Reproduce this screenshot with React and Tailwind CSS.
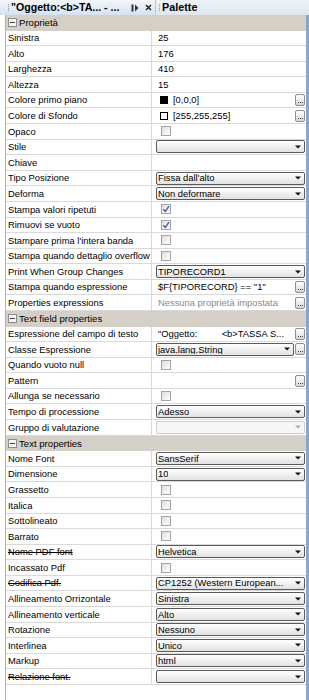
import React from "react";

const FONT = "font-['Liberation_Sans',Arial,sans-serif]";

function Btn() {
  return (
    <div className="ml-auto mr-[1px] flex h-[12px] w-[10px] shrink-0 items-end justify-center gap-[1px] rounded-[2px] border border-[#8e8f8f] bg-linear-to-b from-white to-[#d8d8d8] pb-[2px]">
      <div className="h-[1px] w-[1px] bg-[#444]" />
      <div className="h-[1px] w-[1px] bg-[#444]" />
      <div className="h-[1px] w-[1px] bg-[#444]" />
    </div>
  );
}

function Arrow({ gray }) {
  return (
    <svg width="6" height="4" viewBox="0 0 6 4" className="ml-auto mr-[3px] shrink-0">
      <polygon points="0,0.5 6,0.5 3,3.5" fill={gray ? "#b0b0b0" : "#111"} />
    </svg>
  );
}

function Combo({ text, disabled, withBtn }) {
  return (
    <div className="ml-[4px] flex h-full flex-1 items-center">
      <div
        className={
          "flex h-[13px] flex-1 items-center rounded-[2px] border pl-[1px] " +
          (disabled
            ? "border-[#cdcdcd] bg-[#f6f6f6]"
            : "border-[#5a5a5a] bg-linear-to-b from-white to-[#e2e2e2]")
        }
      >
        <span className="truncate text-[9.4px] leading-none text-black">{text}</span>
        <Arrow gray={disabled} />
      </div>
      {withBtn ? (
        <div className="ml-[1px] flex items-center">
          <Btn />
        </div>
      ) : (
        <div className="w-[1px]" />
      )}
    </div>
  );
}

function Check({ checked }) {
  return (
    <div className="ml-[9px] flex h-[10px] w-[10px] items-center justify-center border border-[#a4a4a4] bg-linear-to-br from-[#dedede] to-white">
      {checked && (
        <svg width="8" height="8" viewBox="0 0 8 8">
          <path d="M1.3 4.2 L3.3 6.4 L7 1.2" fill="none" stroke="#3b5fae" strokeWidth="1.4" />
        </svg>
      )}
    </div>
  );
}

function Value({ v }) {
  if (!v) return null;
  switch (v.t) {
    case "text":
      return (
        <>
          <span className={"pl-[6px] text-[9.4px] leading-none " + (v.gray ? "text-[#8a8a8a]" : "text-black")}>
            {v.s}
          </span>
          {v.btn && <Btn />}
        </>
      );
    case "expr":
      return (
        <>
          <div className="flex w-[132px] justify-between pl-[6px] text-[9.4px] leading-none text-black">
            <span>"Oggetto:</span>
            <span>&lt;b&gt;TASSA S...</span>
          </div>
          <Btn />
        </>
      );
    case "color":
      return (
        <>
          <div className={"ml-[8px] h-[8px] w-[8px] border border-black " + (v.fill ? "bg-black" : "bg-white")} />
          <span className="pl-[5px] text-[9.4px] leading-none text-black">{v.s}</span>
          <Btn />
        </>
      );
    case "check":
      return <Check checked={v.c} />;
    case "combo":
      return <Combo text={v.s} disabled={v.dis} withBtn={v.btn} />;
    case "btn":
      return <Btn />;
    default:
      return null;
  }
}

const T = (s, extra = {}) => ({ t: "text", s, ...extra });
const C = (c) => ({ t: "check", c });
const CB = (s, extra = {}) => ({ t: "combo", s, ...extra });

const rows = [
  { h: "Proprietà" },
  { l: "Sinistra", v: T("25") },
  { l: "Alto", v: T("176") },
  { l: "Larghezza", v: T("410") },
  { l: "Altezza", v: T("15") },
  { l: "Colore primo piano", v: { t: "color", s: "[0,0,0]", fill: true } },
  { l: "Colore di Sfondo", v: { t: "color", s: "[255,255,255]", fill: false } },
  { l: "Opaco", v: C(false) },
  { l: "Stile", v: CB("") },
  { l: "Chiave" },
  { l: "Tipo Posizione", v: CB("Fissa dall'alto") },
  { l: "Deforma", v: CB("Non deformare") },
  { l: "Stampa valori ripetuti", v: C(true) },
  { l: "Rimuovi se vuoto", v: C(true) },
  { l: "Stampare prima l'intera banda", v: C(false) },
  { l: "Stampa quando dettaglio overflow", v: C(false) },
  { l: "Print When Group Changes", v: CB("TIPORECORD1") },
  { l: "Stampa quando espressione", v: T('$F{TIPORECORD} == "1"', { btn: true }) },
  { l: "Properties expressions", v: T("Nessuna proprietà impostata", { btn: true, gray: true }) },
  { h: "Text field properties" },
  { l: "Espressione del campo di testo", v: { t: "expr" } },
  { l: "Classe Espressione", v: CB("java.lang.String", { btn: true }) },
  { l: "Quando vuoto null", v: C(false) },
  { l: "Pattern", v: { t: "btn" } },
  { l: "Allunga se necessario", v: C(false) },
  { l: "Tempo di processione", v: CB("Adesso") },
  { l: "Gruppo di valutazione", v: CB("", { dis: true }) },
  { h: "Text properties" },
  { l: "Nome Font", v: CB("SansSerif") },
  { l: "Dimensione", v: CB("10") },
  { l: "Grassetto", v: C(false) },
  { l: "Italica", v: C(false) },
  { l: "Sottolineato", v: C(false) },
  { l: "Barrato", v: C(false) },
  { l: "Nome PDF font", v: CB("Helvetica"), strike: true },
  { l: "Incassato Pdf", v: C(false) },
  { l: "Codifica Pdf.", v: CB("CP1252 (Western European..."), strike: true },
  { l: "Allineamento Orrizontale", v: CB("Sinistra") },
  { l: "Allineamento verticale", v: CB("Alto") },
  { l: "Rotazione", v: CB("Nessuno") },
  { l: "Interlinea", v: CB("Unico") },
  { l: "Markup", v: CB("html") },
  { l: "Relazione font.", v: CB(""), strike: true },
];

function Header({ text }) {
  return (
    <div className="flex h-[15.58px] items-center bg-[#d4d0c8]">
      <div className="ml-[2px] flex h-[9px] w-[9px] items-center justify-center border border-[#8d8d8d] bg-[#f4f4f4]">
        <div className="h-[1px] w-[5px] bg-[#444]" />
      </div>
      <span className="pl-[2px] text-[9.6px] leading-none text-black">{text}</span>
    </div>
  );
}

function Row({ r }) {
  return (
    <div className="flex h-[15.58px] border-b border-[#d9d9d9] bg-white">
      <div className="flex w-[146px] shrink-0 items-center overflow-hidden whitespace-nowrap border-r border-[#d9d9d9] pl-[2px]">
        <span className={"text-[9.4px] leading-none text-black " + (r.strike ? "line-through" : "")}>{r.l}</span>
      </div>
      <div className="flex min-w-0 flex-1 items-center overflow-hidden whitespace-nowrap">
        <Value v={r.v} />
      </div>
    </div>
  );
}

function Grip() {
  return (
    <div className="flex flex-col gap-[1px]">
      <div className="h-[1px] w-[1px] bg-[#8a98ab]" />
      <div className="h-[1px] w-[1px] bg-[#8a98ab]" />
      <div className="h-[1px] w-[1px] bg-[#8a98ab]" />
      <div className="h-[1px] w-[1px] bg-[#8a98ab]" />
    </div>
  );
}

export default function App() {
  return (
    <div className={"flex h-[700px] w-[309px] flex-col overflow-hidden bg-white " + FONT}>
      {/* tab bar */}
      <div className="flex h-[15px] shrink-0 items-center bg-linear-to-b from-[#eef2f7] to-[#dfe6ee]">
        <div className="flex h-full w-[156px] items-center border-r border-[#b9c4d2] bg-linear-to-b from-[#f2f6fb] to-[#d7e2ef] pl-[8px]">
          <Grip />
          <span className="pl-[2px] text-[10.6px] font-bold leading-none text-black">"Oggetto:&lt;b&gt;TA... - ...</span>
          <svg width="8" height="8" viewBox="0 0 8 8" className="ml-auto mr-[6px]">
            <rect x="0.5" y="0.5" width="2" height="7" fill="#333" />
            <polygon points="4,0.5 7.5,4 4,7.5" fill="#333" />
          </svg>
          <svg width="7" height="7" viewBox="0 0 7 7" className="mr-[3px]">
            <path d="M1 1 L6 6 M6 1 L1 6" stroke="#222" strokeWidth="1.5" />
          </svg>
        </div>
        <div className="flex items-center pl-[3px]">
          <Grip />
          <span className="pl-[2px] text-[10.8px] font-bold leading-none text-black">Palette</span>
        </div>
      </div>
      {/* body */}
      <div className="flex flex-1">
        <div className="w-[5px] shrink-0 bg-white" />
        <div className="flex flex-1 flex-col border-l border-[#9fb2c9]">
          {rows.map((r, i) => (r.h ? <Header key={i} text={r.h} /> : <Row key={i} r={r} />))}
        </div>
        <div className="w-[3px] shrink-0 bg-[#86a7d2]" />
      </div>
    </div>
  );
}
